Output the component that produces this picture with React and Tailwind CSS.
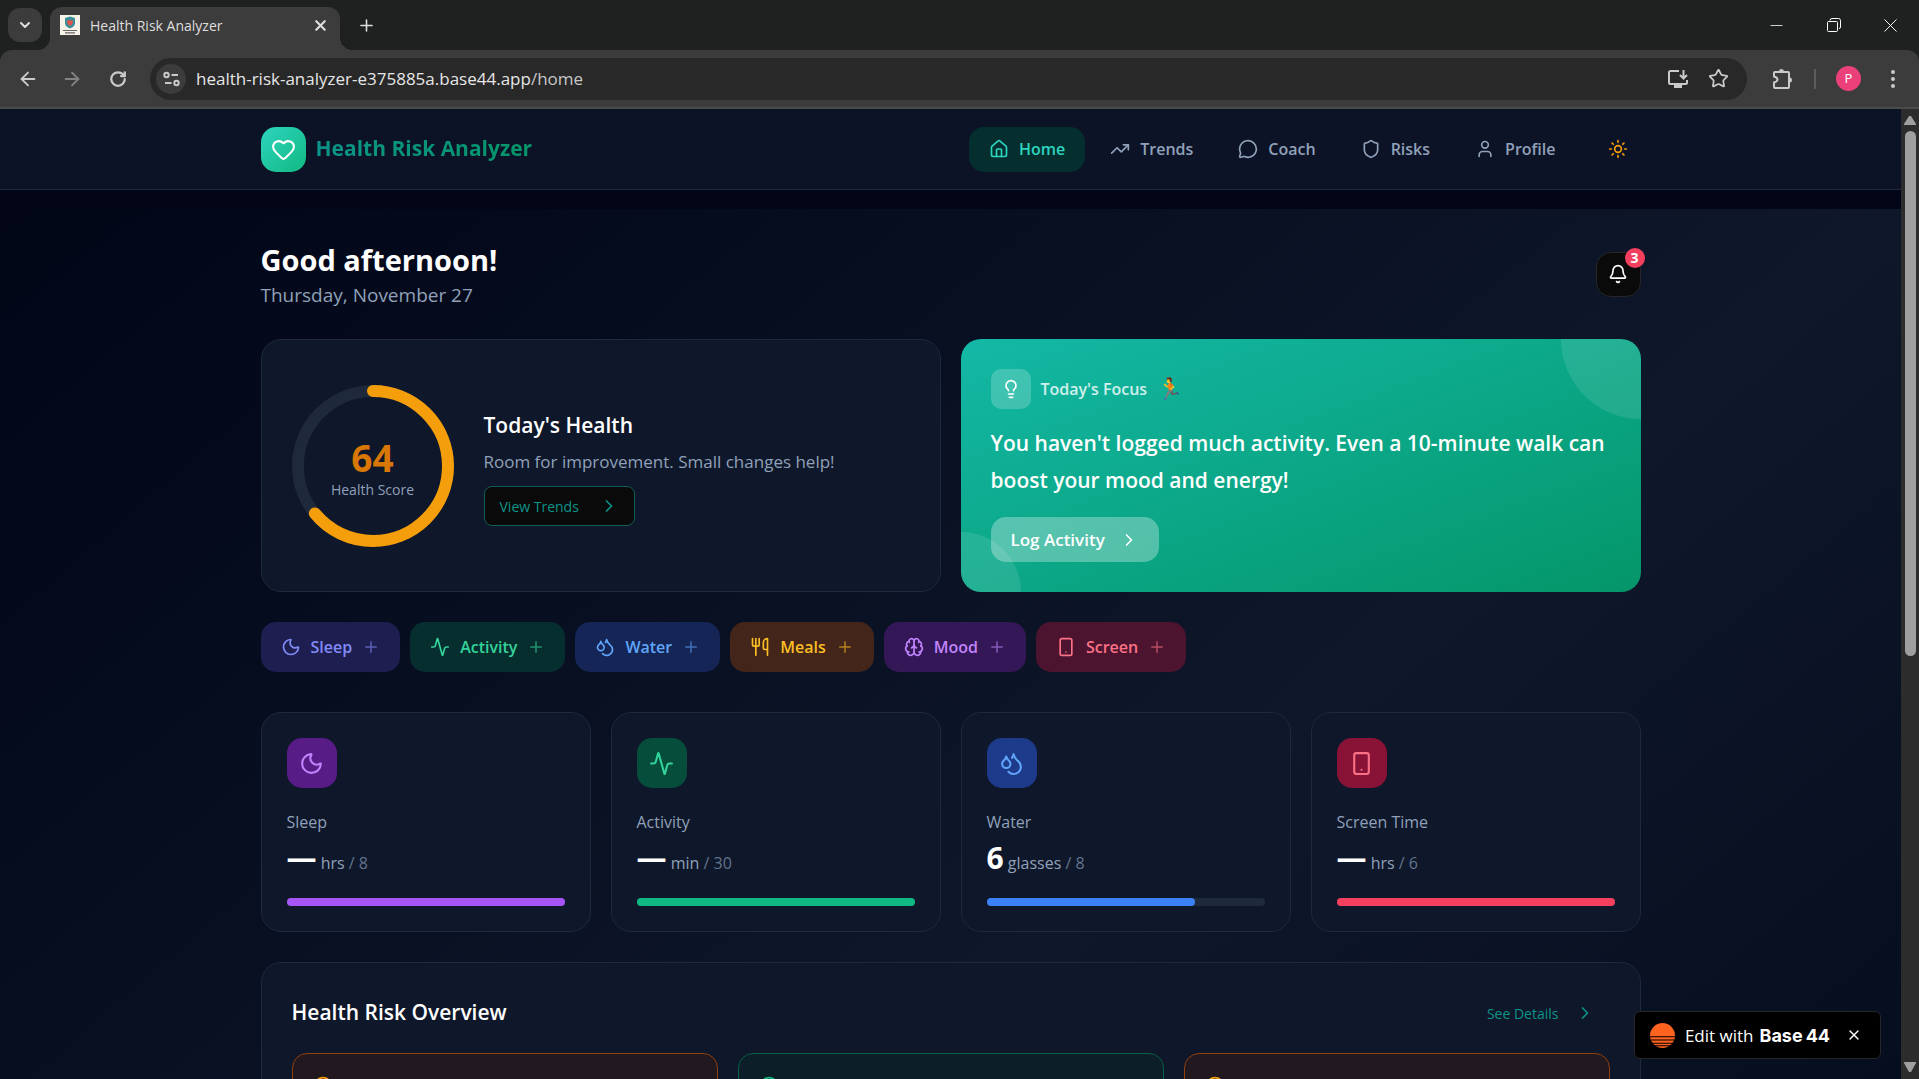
import React, { useState } from 'react';
import {
    Activity, ArrowLeft, ArrowRight, Bell, Brain, ChevronDown, ChevronRight, Circle, Droplets, EllipsisVertical,
    Heart, House, Lightbulb, MessageCircle, Minus, Moon, Plus, RotateCw, Shield, Smartphone,
    Star, Sun, TrendingUp, User, Utensils, X,
} from 'lucide-react';

const navItems = [
    { label: 'Home', icon: House },
    { label: 'Trends', icon: TrendingUp },
    { label: 'Coach', icon: MessageCircle },
    { label: 'Risks', icon: Shield },
    { label: 'Profile', icon: User },
];

const quickActions = [
    { label: 'Sleep', icon: Moon, style: 'bg-[#1e1e50] text-[#818cf8]' },
    { label: 'Activity', icon: Activity, style: 'bg-[#072e2f] text-[#34d399]' },
    { label: 'Water', icon: Droplets, style: 'bg-[#152555] text-[#60a5fa]' },
    { label: 'Meals', icon: Utensils, style: 'bg-[#43251a] text-[#fbbf24]' },
    { label: 'Mood', icon: Brain, style: 'bg-[#341756] text-[#c084fc]' },
    { label: 'Screen', icon: Smartphone, style: 'bg-[#4c142f] text-[#fb7185]' },
];

const stats = [
    { label: 'Sleep', icon: Moon, value: null, unit: 'hrs', goal: 8, percent: 100, box: 'bg-[#581c87] text-[#c084fc]', bar: 'bg-[#a855f7]' },
    { label: 'Activity', icon: Activity, value: null, unit: 'min', goal: 30, percent: 100, box: 'bg-[#064e3b] text-[#34d399]', bar: 'bg-[#10b981]' },
    { label: 'Water', icon: Droplets, value: 6, unit: 'glasses', goal: 8, percent: 75, box: 'bg-[#1e3a8a] text-[#60a5fa]', bar: 'bg-[#3b82f6]' },
    { label: 'Screen Time', icon: Smartphone, value: null, unit: 'hrs', goal: 6, percent: 100, box: 'bg-[#881337] text-[#fb7185]', bar: 'bg-[#f43f5e]' },
];

const risks = [
    { style: 'border-[#92400e] bg-[#21191f]', icon: 'text-[#f59e0b]' },
    { style: 'border-[#065f46] bg-[#0c1e28]', icon: 'text-[#10b981]' },
    { style: 'border-[#92400e] bg-[#21191f]', icon: 'text-[#f59e0b]' },
];

const BrowserChrome = () => (
    <div className="shrink-0 bg-[#1f2020] text-[#dedede]">
        <div className="flex h-[50px] items-stretch">
            <div className="flex items-center pl-2">
                <button aria-label="Search tabs" className="flex h-[34px] w-[34px] items-center justify-center rounded-xl bg-[#3c3c3c]">
                    <ChevronDown size={16} strokeWidth={3} />
                </button>
            </div>
            {/* curved feet on both sides of the tab */}
            <span className="-ml-1 h-3 w-3 self-end bg-[radial-gradient(circle_at_top_left,transparent_12px,#3c3c3c_12px)]"></span>
            <div className="mt-[7px] flex w-[290px] items-center rounded-t-xl bg-[#3c3c3c] pr-[10px] pb-[7px] pl-[10px]">
                <svg viewBox="0 0 20 20" className="h-5 w-5">
                    <rect width="20" height="20" fill="#f7f3e8" />
                    <path d="M10 1.500L15 3v5c0 3-2.500 4.500-5 5.500C7.500 12.500 5 11 5 8V3z" fill="#3a8f98" />
                    <path d="M10 11C7 9 6.500 7 7.500 5.500 8.500 4.500 9.500 5 10 6c.5-1 1.500-1.500 2.500-.5C13.500 7 13 9 10 11z" fill="#e0554f" />
                    <path d="M3 15.500h14M5 17.800h10" stroke="#666" strokeWidth="1.200" />
                </svg>
                <span className="ml-[10px] flex-1 text-[14px]">Health Risk Analyzer</span>
                <button aria-label="Close tab" className="flex h-5 w-5 items-center justify-center">
                    <X size={17} strokeWidth={3} />
                </button>
            </div>
            <span className="h-3 w-3 self-end bg-[radial-gradient(circle_at_top_right,transparent_12px,#3c3c3c_12px)]"></span>
            <button aria-label="New tab" className="ml-1 flex w-5 items-center justify-center">
                <Plus size={19} strokeWidth={2} />
            </button>
            <div className="ml-auto flex items-center text-white">
                <button aria-label="Minimize" className="flex w-[57px] justify-center"><Minus size={19} strokeWidth={1} /></button>
                <button aria-label="Restore" className="flex w-[57px] justify-center">
                    <svg width="14" height="14" viewBox="0 0 14 14" fill="none" stroke="currentColor">
                        <rect x=".5" y="3.500" width="10" height="10" rx="1" />
                        <path d="M3 2.500Q3 .500 5 .500h6.500q2 0 2 2V9q0 1.500-1.500 1.500" />
                    </svg>
                </button>
                <button aria-label="Close window" className="flex w-[57px] justify-center"><X size={23} strokeWidth={1} /></button>
            </div>
        </div>
        <div className="flex h-[59px] items-center rounded-t-xl border-b-2 border-[#4a4c4b] bg-[#3c3c3c] pr-[14px] pl-4 text-[#cacaca]">
            <button aria-label="Back" className="flex w-6 justify-center"><ArrowLeft size={22} strokeWidth={2} /></button>
            <button aria-label="Forward" className="ml-5 flex w-6 justify-center text-[#838383]"><ArrowRight size={22} strokeWidth={2} /></button>
            <button aria-label="Reload" className="ml-[22px] flex w-6 justify-center"><RotateCw size={18} strokeWidth={3} /></button>
            <div className="ml-5 flex h-[42px] flex-1 items-center rounded-full bg-[#282828] pr-[17px] pl-[6px]">
                <button aria-label="Site information" className="flex h-[30px] w-[30px] items-center justify-center rounded-full bg-[#3c3c3c]">
                    <svg width="17" height="16" viewBox="0 0 17 16" fill="none" stroke="currentColor" strokeWidth="2">
                        <circle cx="3.500" cy="4" r="2.200" />
                        <path d="M8.500 4H15M2 12h6.500" />
                        <circle cx="13.500" cy="12" r="2.200" />
                    </svg>
                </button>
                <p className="ml-[10px] flex-1 text-[17px] text-[#e6e6e6]">health-risk-analyzer-e375885a.base44.app<span className="text-[#c7c7c7]">/home</span></p>
                <button aria-label="Install app" className="flex w-6 justify-center">
                    <svg width="22" height="22" viewBox="0 0 22 22" fill="none" stroke="currentColor" strokeWidth="2">
                        <path d="M12 3H3.500Q2 3 2 4.500v10Q2 16 3.500 16h15q1.500 0 1.500-1.500V12M16.500 2v8M13 7l3.500 3.500L20 7" />
                        <path d="M7 18.500h8" strokeWidth="3" />
                    </svg>
                </button>
                <button aria-label="Bookmark" className="ml-4 flex w-6 justify-center">
                    <Star size={21} strokeWidth={2} strokeLinejoin="miter" />
                </button>
            </div>
            <button aria-label="Extensions" className="ml-[23px] flex w-6 justify-center">
                <svg width="24" height="24" viewBox="0 0 24 24" fill="none" stroke="currentColor" strokeWidth="2">
                    <path d="M5 5h13q1 0 1 1v14q0 1-1 1H5q-1 0-1-1v-4.500q3.500-1 3.500-3t-3.500-3V6q0-1 1-1z" />
                    <path d="M9 4.500a2.500 2.500 0 0 1 5 0zM19.500 10.500a2.500 2.500 0 0 1 0 5z" fill="currentColor" stroke="none" />
                </svg>
            </button>
            <span className="ml-5 h-5 w-[2px] bg-[#5c5c5c]"></span>
            <button aria-label="Account" className="ml-5 flex h-[25px] w-[25px] items-center justify-center rounded-full bg-[#ec407a] text-[13px] text-white">P</button>
            <button aria-label="Browser menu" className="ml-5 flex w-6 justify-center"><EllipsisVertical size={24} strokeWidth={2} /></button>
        </div>
    </div>
);

const Navbar = () => {
    const [active, setActive] = useState('Home');

    return (
        <header className="border-b border-slate-800 bg-[#0c1326]">
            <div className="mx-auto flex h-20 max-w-[1440px] items-center px-[30px]">
                <a href="#home" className="flex items-center gap-[10px]">
                    <span className="flex h-[45px] w-[45px] items-center justify-center rounded-[15px] bg-linear-to-br from-[#2dd4bf] to-[#10b981]">
                        <Heart size={25} className="text-white" />
                    </span>
                    <span className="bg-linear-to-r from-[#0d9488] to-[#059669] bg-clip-text text-[21px] font-bold text-transparent">Health Risk Analyzer</span>
                </a>
                <nav className="ml-auto flex items-center gap-[5px]">
                    {navItems.map(({ label, icon: Icon }) => (
                        <a
                            key={label}
                            href={'#' + label.toLowerCase()}
                            onClick={() => setActive(label)}
                            className={"flex h-[45px] items-center gap-[10px] rounded-[15px] px-5 text-[16px] font-semibold" + (active === label ? " bg-[#042f2e] text-[#2dd4bf]" : " text-slate-400")}
                        >
                            <Icon size={20} />
                            {label}
                        </a>
                    ))}
                </nav>
                <button aria-label="Toggle theme" className="ml-5 flex h-[45px] w-[45px] items-center justify-center text-[#f59e0b]">
                    <Sun size={20} />
                </button>
            </div>
        </header>
    );
};

const ScoreRing = ({ score }) => {
    const length = 2 * Math.PI * 75;

    return (
        <div className="relative h-[162px] w-[162px] shrink-0">
            <svg viewBox="0 0 162 162" className="h-full w-full -rotate-90" fill="none" strokeWidth="12">
                <circle cx="81" cy="81" r="75" stroke="#1e293b" />
                <circle cx="81" cy="81" r="75" stroke="#f59e0b" strokeLinecap="round" strokeDasharray={length} strokeDashoffset={length * (1 - score / 100)} />
            </svg>
            <div className="absolute inset-0 flex flex-col items-center justify-center pt-1">
                <span className="text-[37px] leading-[44px] font-bold text-[#d97706]">{score}</span>
                <span className="text-[14px] leading-5 text-slate-400">Health Score</span>
            </div>
        </div>
    );
};

const StatCard = ({ label, icon: Icon, value, unit, goal, percent, box, bar }) => (
    <div className="rounded-[20px] border border-slate-800 bg-[#0f172a] p-[25px]">
        <div className={"flex h-[50px] w-[50px] items-center justify-center rounded-[15px] " + box}>
            <Icon size={25} />
        </div>
        <p className="mt-5 text-[16px] leading-7 text-slate-400">{label}</p>
        <p className="mt-[2px] text-[16px] leading-10 text-slate-400">
            <span className="text-[30px] font-bold text-white">{value === null ? '—' : value}</span> {unit} <span className="text-slate-500">/ {goal}</span>
        </p>
        <div className="mt-[15px] h-2 rounded-full bg-slate-800">
            <div className={"h-full rounded-full " + bar} style={{ width: percent + '%' }}></div>
        </div>
    </div>
);

const Dashboard = () => (
    <main className="min-h-[1616px] bg-linear-to-br from-[#020617] via-[#0f172a] to-[#020617]">
        <div className="mx-auto max-w-[1440px] p-[30px]">
            <div className="flex items-center justify-between">
                <div>
                    <h1 className="text-[29px] leading-[42px] font-bold text-white">Good afternoon!</h1>
                    <p className="text-[19px] leading-7 text-slate-400">Thursday, November 27</p>
                </div>
                <button aria-label="Notifications" className="relative flex h-[45px] w-[45px] items-center justify-center rounded-[15px] border border-[#262626] bg-[#0a0a0a] text-white">
                    <Bell size={20} />
                    <span className="absolute -top-[5px] -right-[5px] flex h-5 w-5 items-center justify-center rounded-full bg-[#f43f5e] text-[14px] font-bold">3</span>
                </button>
            </div>

            <div className="mt-[30px] grid grid-cols-2 gap-5">
                <div className="flex items-center gap-[30px] rounded-[20px] border border-slate-800 bg-[#0f172a] px-[30px]">
                    <ScoreRing score={64} />
                    <div>
                        <h2 className="mt-[3px] text-[21px] leading-[35px] font-semibold text-white">Today's Health</h2>
                        <p className="mt-[6px] text-[17px] leading-[25px] text-slate-400">Room for improvement. Small changes help!</p>
                        <button className="mt-3 flex h-10 items-center gap-5 rounded-lg border border-[#115e59] bg-[#0a0a0a] px-[15px] text-[14px] font-medium text-[#0d9488]">
                            View Trends
                            <ChevronRight size={20} />
                        </button>
                    </div>
                </div>

                <div className="relative overflow-hidden rounded-[20px] bg-linear-to-br from-[#14b8a6] to-[#059669] p-[30px] text-white">
                    <div className="absolute -top-20 -right-20 h-40 w-40 rounded-full bg-white/10"></div>
                    <div className="absolute -bottom-[60px] -left-[60px] h-[120px] w-[120px] rounded-full bg-white/10"></div>
                    <div className="flex h-10 items-center gap-[10px]">
                        <span className="flex h-10 w-10 items-center justify-center rounded-[10px] bg-white/20">
                            <Lightbulb size={20} />
                        </span>
                        <span className="text-[16px] font-semibold text-white/80">Today's Focus</span>
                        <span className="text-[21px]">🏃</span>
                    </div>
                    <p className="mt-4 text-[21px] leading-[37px] font-semibold">You haven't logged much activity. Even a 10-minute walk can boost your mood and energy!</p>
                    <button className="mt-[18px] flex h-[45px] items-center gap-[14px] rounded-[15px] bg-white/30 px-5 text-[17px] font-semibold">
                        Log Activity
                        <ChevronRight size={20} />
                    </button>
                </div>
            </div>

            <div className="mt-[30px] flex gap-[10px]">
                {quickActions.map(({ label, icon: Icon, style }) => (
                    <button key={label} className={"flex h-[50px] items-center gap-[10px] rounded-[15px] px-5 text-[16px] font-semibold " + style}>
                        <Icon size={20} />
                        {label}
                        <Plus size={18} className="opacity-60" />
                    </button>
                ))}
            </div>

            <div className="mt-10 grid grid-cols-4 gap-5">
                {stats.map((stat) => <StatCard key={stat.label} {...stat} />)}
            </div>

            <section className="mt-[30px] rounded-[20px] border border-slate-800 bg-[#0f172a] p-[30px]">
                <div className="flex h-10 items-center justify-between">
                    <h2 className="text-[21px] font-semibold text-white">Health Risk Overview</h2>
                    <button className="flex items-center gap-4 px-[15px] text-[14px] font-medium text-[#0d9488]">
                        See Details
                        <ChevronRight size={20} />
                    </button>
                </div>
                <div className="mt-5 grid grid-cols-3 gap-5">
                    {risks.map((risk, i) => (
                        <div key={i} className={"h-40 rounded-[15px] border px-5 py-[22px] " + risk.style}>
                            <Circle size={20} className={risk.icon} />
                        </div>
                    ))}
                </div>
            </section>
        </div>
    </main>
);

const Scrollbar = () => (
    <div className="flex w-[18px] shrink-0 flex-col items-center bg-[#2c2c2c] py-1">
        <svg width="12" height="16" viewBox="0 0 12 16"><path d="M5 3h2l5 8v1H0v-1z" fill="#9f9f9f" /></svg>
        <div className="mt-[2px] h-[525px] w-[11px] rounded-full bg-[#9f9f9f]"></div>
        <svg width="12" height="16" viewBox="0 0 12 16" className="mt-auto"><path d="M0 3h12v1l-5 9H5L0 4z" fill="#9f9f9f" /></svg>
    </div>
);

const EditBadge = () => (
    <div className="fixed right-[38px] bottom-5 flex h-12 items-center rounded-md border border-[#262626] bg-black pr-[18px] pl-[15px] text-white">
        <svg width="25" height="25" viewBox="0 0 25 25">
            <circle cx="12.500" cy="12.500" r="12.500" fill="#ff631f" />
            <path d="M0 13.700h25M0 17h25M0 20.200h25M0 22.800h25" stroke="#000" strokeWidth="1.100" />
        </svg>
        <a href="#edit" className="ml-[10px] flex items-baseline gap-[6px] text-[17px]">
            Edit with <span className="font-['Inter'] text-[18px] font-bold">Base<span className="ml-[3px]">44</span></span>
        </a>
        <button aria-label="Dismiss" className="ml-4"><X size={16} /></button>
    </div>
);

const App = () => (
    <div className="flex h-screen flex-col overflow-hidden bg-[#020617] font-['Open_Sans','Noto_Sans',sans-serif]">
        <BrowserChrome />
        <div className="flex min-h-0 flex-1">
            <div className="min-w-0 flex-1 overflow-hidden">
                <Navbar />
                <div className="pt-[19px]">
                    <Dashboard />
                </div>
            </div>
            <Scrollbar />
        </div>
        <EditBadge />
    </div>
);

export default App;
